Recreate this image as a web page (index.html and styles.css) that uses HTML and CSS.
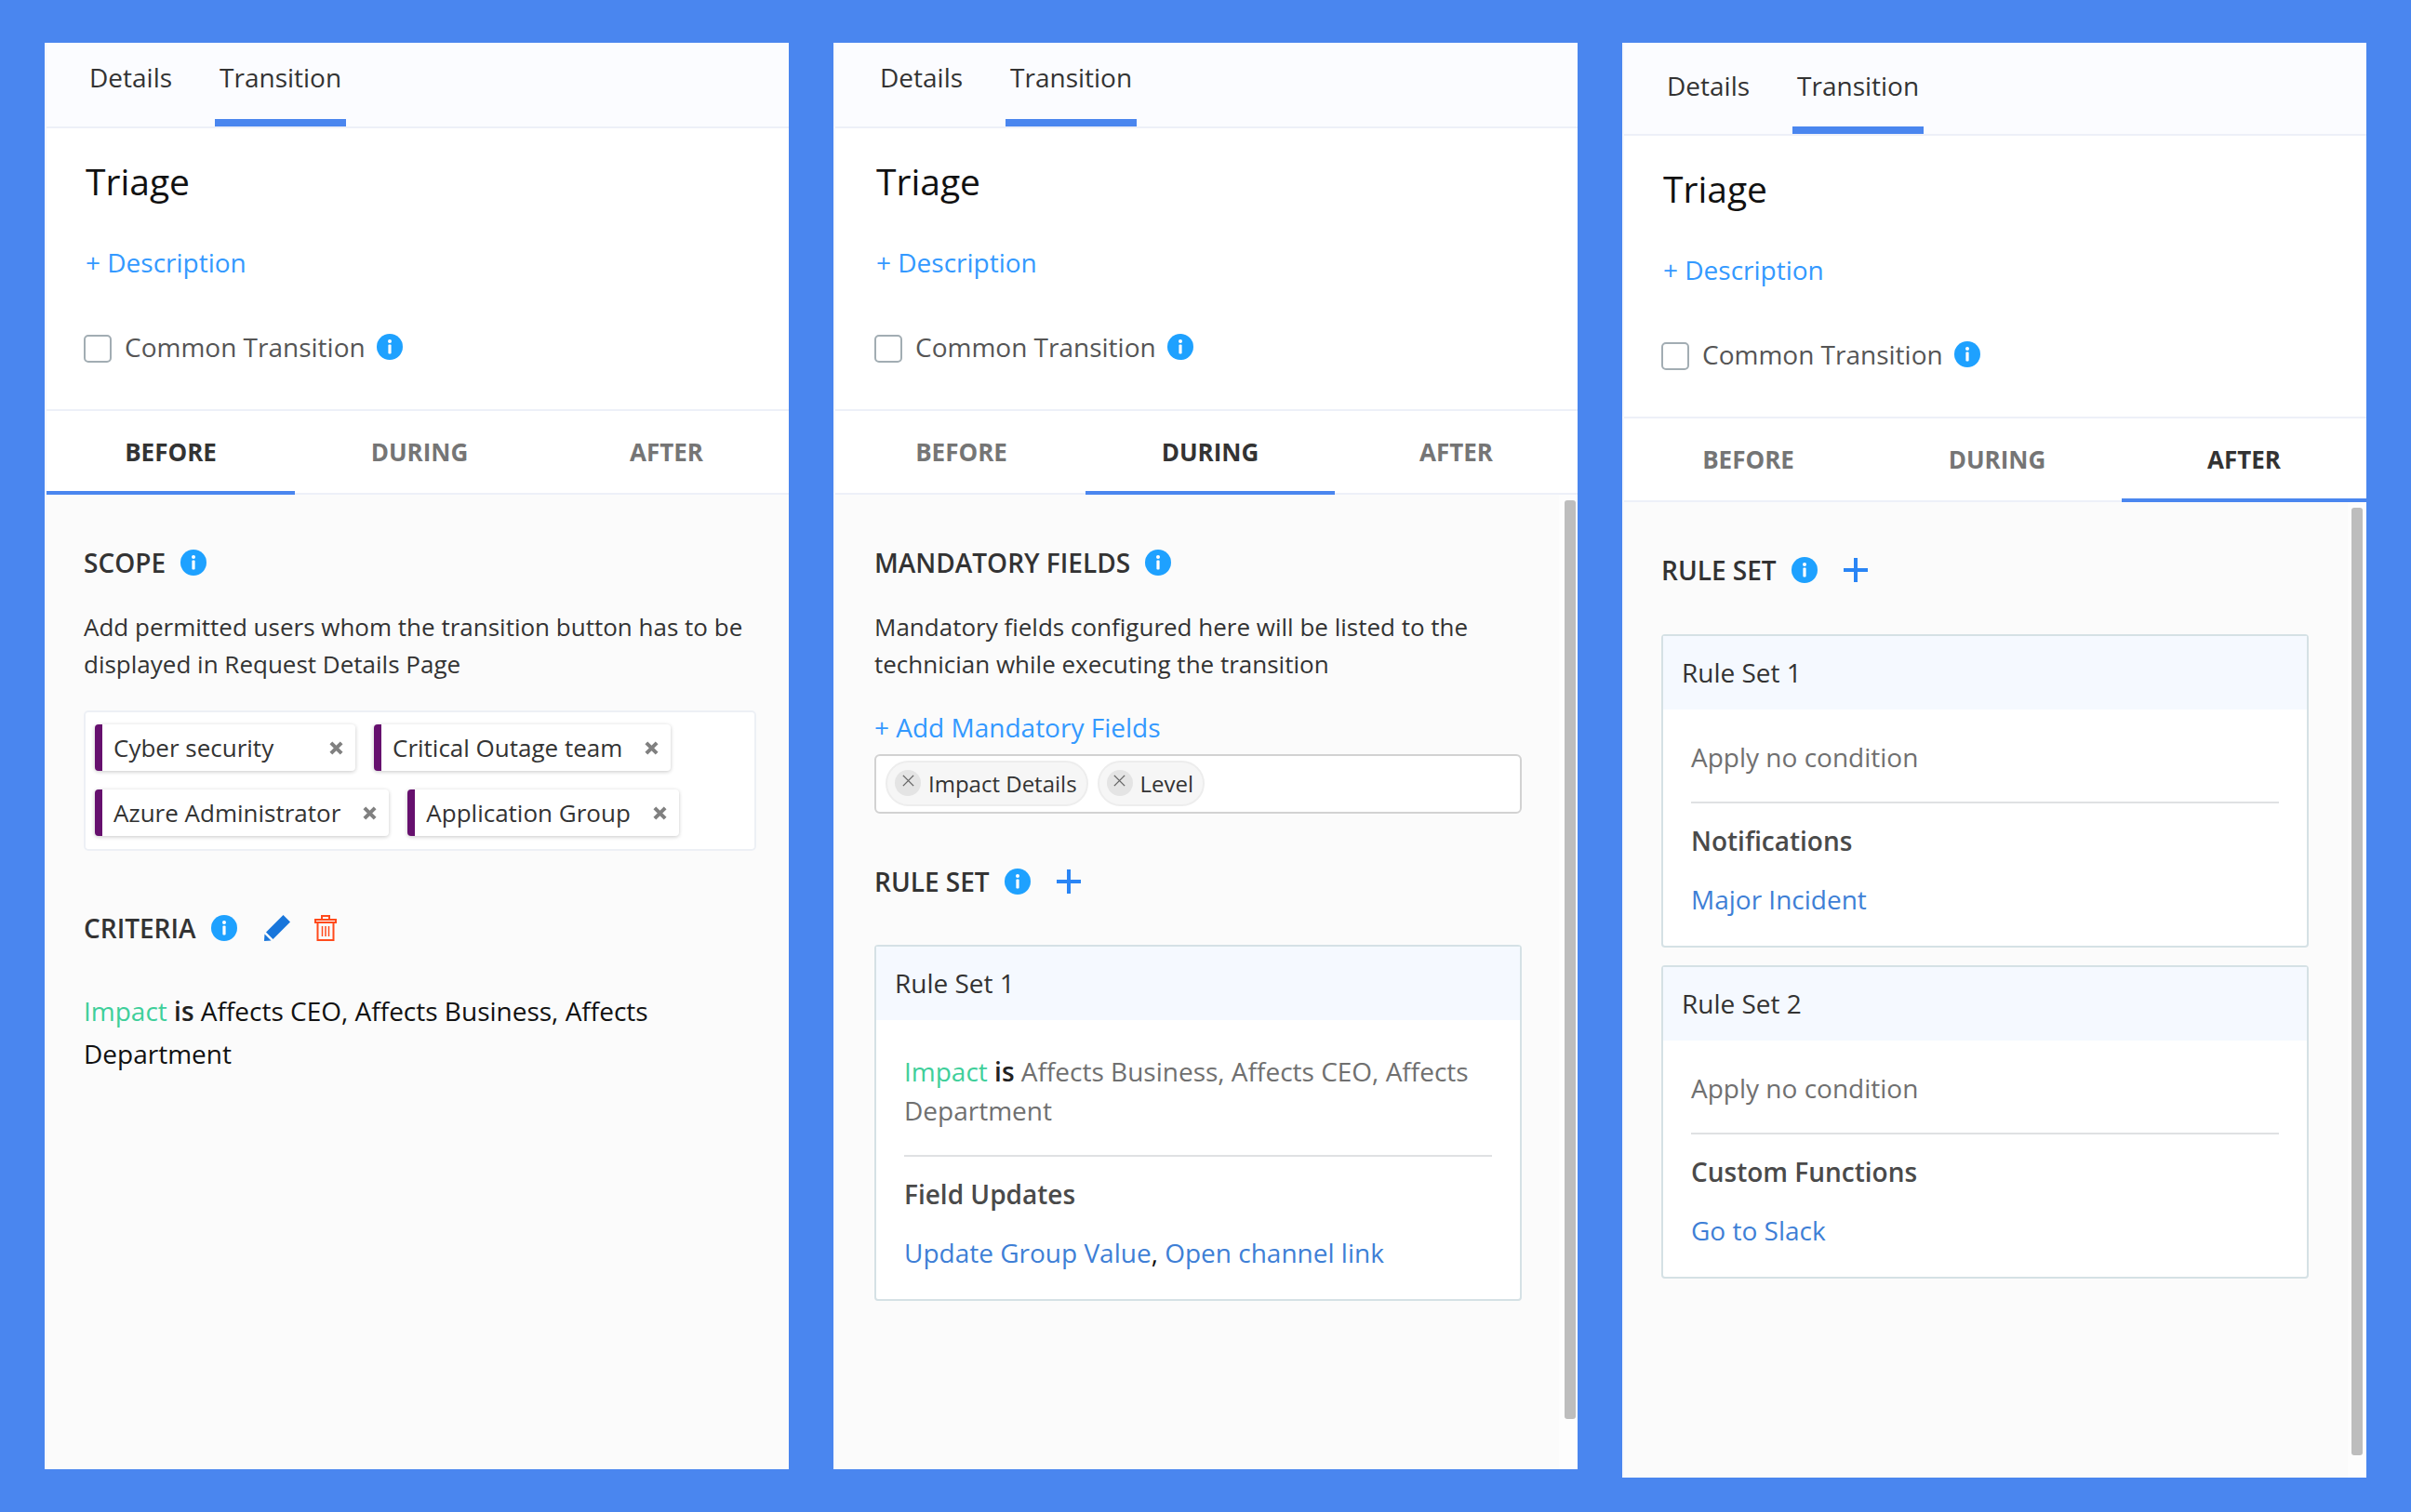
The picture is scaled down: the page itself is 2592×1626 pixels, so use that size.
FILE: index.html
```html
<!DOCTYPE html>
<html lang="en">
<head>
<meta charset="utf-8">
<title>Transition panels</title>
<link rel="stylesheet" href="styles.css">
</head>
<body>
<svg class="defs" width="0" height="0" aria-hidden="true">
  <symbol id="info" viewBox="0 0 28 28">
    <circle cx="14" cy="14" r="14" fill="#1ea1ff"/>
    <circle cx="14" cy="8" r="2" fill="#fff"/>
    <rect x="12.4" y="11.5" width="3.2" height="10" rx="1" fill="#fff"/>
  </symbol>
  <symbol id="plus" viewBox="0 0 26 26">
    <path d="M13 0v26M0 13h26" stroke="#2a85f5" stroke-width="4" fill="none"/>
  </symbol>
</svg>

<main class="board">
  <section class="panel">
    <nav class="top-tabs"><a class="top-tab">Details</a><a class="top-tab is-active">Transition</a></nav>
    <header class="head">
      <h1 class="title">Triage</h1>
      <a class="add-link desc-link">+ Description</a>
      <div class="common"><span class="check"></span><span>Common Transition</span><svg class="info"><use href="#info"/></svg></div>
    </header>
    <div class="stages"><span class="stage is-active">BEFORE</span><span class="stage">DURING</span><span class="stage">AFTER</span></div>
    <div class="body">
      <div class="sec-head"><h2 class="sec-title">SCOPE</h2><svg class="info"><use href="#info"/></svg></div>
      <p class="sec-text">Add permitted users whom the transition button has to be displayed in Request Details Page</p>
      <div class="tagbox">
        <span class="tag tag-wide">Cyber security<svg class="tag-x" viewBox="0 0 12 12"><path d="M1.500 1.500l9 9M10.500 1.500l-9 9"/></svg></span>
        <span class="tag">Critical Outage team<svg class="tag-x" viewBox="0 0 12 12"><path d="M1.500 1.500l9 9M10.500 1.500l-9 9"/></svg></span>
        <span class="tag">Azure Administrator<svg class="tag-x" viewBox="0 0 12 12"><path d="M1.500 1.500l9 9M10.500 1.500l-9 9"/></svg></span>
        <span class="tag">Application Group<svg class="tag-x" viewBox="0 0 12 12"><path d="M1.500 1.500l9 9M10.500 1.500l-9 9"/></svg></span>
      </div>
      <div class="sec-head criteria-head">
        <h2 class="sec-title">CRITERIA</h2><svg class="info"><use href="#info"/></svg>
        <svg class="pencil" viewBox="0 0 28 28"><path d="M20.500 0L28 7.500 9.500 26 2 18.500z" fill="#1976db"/><path d="M0.500 20.500L7.500 27.500 0 28z" fill="#1976db"/></svg>
        <svg class="trash" viewBox="0 0 24 28" fill="none" stroke="#ff4a1c" stroke-width="2"><path d="M8 5V1h8v4M1 5h22v3H1zM3.500 8v19h17V8"/><path d="M8.500 12v11M12 12v11M15.500 12v11" stroke-width="1.500"/></svg>
      </div>
      <p class="criteria"><span class="field">Impact</span> <b class="op">is</b> Affects CEO, Affects Business, Affects Department</p>
    </div>
  </section>

  <section class="panel panel-mid">
    <nav class="top-tabs"><a class="top-tab">Details</a><a class="top-tab is-active">Transition</a></nav>
    <header class="head">
      <h1 class="title">Triage</h1>
      <a class="add-link desc-link">+ Description</a>
      <div class="common"><span class="check"></span><span>Common Transition</span><svg class="info"><use href="#info"/></svg></div>
    </header>
    <div class="stages"><span class="stage">BEFORE</span><span class="stage is-active">DURING</span><span class="stage">AFTER</span></div>
    <div class="body body-scroll">
      <div class="sec-head"><h2 class="sec-title">MANDATORY FIELDS</h2><svg class="info"><use href="#info"/></svg></div>
      <p class="sec-text">Mandatory fields configured here will be listed to the technician while executing the transition</p>
      <a class="add-link mand-link">+ Add Mandatory Fields</a>
      <div class="chipbox">
        <span class="chip"><span class="chip-x"><svg viewBox="0 0 16 16"><path d="M2 2l12 12M14 2L2 14"/></svg></span>Impact Details</span>
        <span class="chip"><span class="chip-x"><svg viewBox="0 0 16 16"><path d="M2 2l12 12M14 2L2 14"/></svg></span>Level</span>
      </div>
      <div class="sec-head rule-head"><h2 class="sec-title">RULE SET</h2><svg class="info"><use href="#info"/></svg><svg class="plus"><use href="#plus"/></svg></div>
      <article class="card">
        <h3 class="card-head">Rule Set 1</h3>
        <div class="card-body">
          <p class="cond cond-rule"><span class="field">Impact</span> <b class="op">is</b> Affects Business, Affects CEO, Affects Department</p>
          <h4 class="act-title">Field Updates</h4>
          <p class="act-links"><a class="act">Update Group Value</a>, <a class="act">Open channel link</a></p>
        </div>
      </article>
      <div class="track"><div class="scrollbar"></div></div>
    </div>
  </section>

  <section class="panel panel-last">
    <nav class="top-tabs"><a class="top-tab">Details</a><a class="top-tab is-active">Transition</a></nav>
    <header class="head">
      <h1 class="title">Triage</h1>
      <a class="add-link desc-link">+ Description</a>
      <div class="common"><span class="check"></span><span>Common Transition</span><svg class="info"><use href="#info"/></svg></div>
    </header>
    <div class="stages"><span class="stage">BEFORE</span><span class="stage">DURING</span><span class="stage is-active">AFTER</span></div>
    <div class="body body-scroll">
      <div class="sec-head"><h2 class="sec-title">RULE SET</h2><svg class="info"><use href="#info"/></svg><svg class="plus"><use href="#plus"/></svg></div>
      <article class="card card-first">
        <h3 class="card-head">Rule Set 1</h3>
        <div class="card-body">
          <p class="cond">Apply no condition</p>
          <h4 class="act-title">Notifications</h4>
          <p class="act-links"><a class="act">Major Incident</a></p>
        </div>
      </article>
      <article class="card card-next">
        <h3 class="card-head">Rule Set 2</h3>
        <div class="card-body">
          <p class="cond">Apply no condition</p>
          <h4 class="act-title">Custom Functions</h4>
          <p class="act-links"><a class="act">Go to Slack</a></p>
        </div>
      </article>
      <div class="track"><div class="scrollbar"></div></div>
    </div>
  </section>
</main>
</body>
</html>
```
FILE: styles.css
```css
* { box-sizing: border-box; }
html, body { margin: 0; height: 100%; }
body {
  background: #4a86ef;
  font-family: "Open Sans", "Noto Sans", sans-serif;
  font-size: 26px;
  color: #333;
  overflow: hidden;
}
.defs { position: absolute; }
.board {
  display: flex;
  align-items: flex-start;
  gap: 48px;
  padding: 46px 48px 0;
}
.panel {
  width: 800px;
  height: 1534px;
  display: flex;
  flex-direction: column;
  background: #fff;
  border-left: 2px solid #f4f7fd;
  --inset: 40px;
}
.panel-mid { --inset: 42px; }
.panel-last { height: 1543px; }

.top-tabs {
  height: 92px;
  flex: none;
  display: flex;
  gap: 41px;
  padding-left: 41px;
  background: #fbfcff;
  border-bottom: 2px solid #edf0f8;
}
.panel-mid .top-tabs { padding-left: 43px; }
.panel-last .top-tabs { height: 100px; }
.top-tab {
  height: 90px;
  padding: 0 5px;
  line-height: 74px;
  font-size: 28px;
  color: #333;
}
.panel-last .top-tab { height: 98px; line-height: 92px; }
.top-tab.is-active { border-bottom: 8px solid #4a86ef; }

.head {
  height: 304px;
  flex: none;
  padding-left: var(--inset);
  border-bottom: 2px solid #edf0f8;
}
.title {
  margin: 0 0 0 2px;
  padding-top: 30px;
  font-size: 39px;
  font-weight: 400;
  line-height: 54px;
  color: #111;
}
.add-link { display: block; color: #3399ff; font-size: 28px; line-height: 36px; }
.desc-link { margin: 42px 0 0 2px; }
.common {
  display: flex;
  align-items: center;
  margin-top: 46px;
  height: 54px;
  color: #555;
  font-size: 28px;
}
.check {
  width: 30px;
  height: 30px;
  margin: 3px 14px 0 0;
  background: #fff;
  border: 2px solid #a2adb3;
  border-radius: 5px;
}
.info { width: 28px; height: 28px; margin-left: 12px; flex: none; }

.stages {
  height: 90px;
  flex: none;
  display: grid;
  grid-template-columns: 267px 268px 263px;
  border-bottom: 2px solid #edf0f8;
}
.panel-mid .stages { grid-template-columns: 267px 268px 261px; padding-left: 2px; }
.stage {
  display: block;
  height: 90px;
  line-height: 89px;
  text-align: center;
  font-size: 26px;
  font-weight: 700;
  color: #757575;
}
.stage.is-active { color: #333; border-bottom: 4px solid #4a86ef; }

.body {
  position: relative;
  flex: 1;
  background: #fbfbfb;
  padding: 53px 35px 0 var(--inset);
}
.body-scroll { padding-right: 60px; }
.panel-last .body-scroll { padding-right: 62px; }
.sec-head { display: flex; align-items: center; height: 40px; }
.sec-title { margin: 0; font-size: 28px; font-weight: 600; line-height: 40px; color: #333; }
.sec-head .info { margin-left: 16px; }
.sec-text { margin: 29px 0 0; font-size: 26px; line-height: 40px; color: #333; }

.tagbox {
  display: flex;
  flex-wrap: wrap;
  gap: 20px;
  margin-top: 30px;
  padding: 13px 10px 14px;
  background: #fff;
  border: 2px solid #edf0f5;
  border-radius: 5px;
}
.tag {
  display: flex;
  align-items: center;
  justify-content: space-between;
  height: 50px;
  padding: 0 13px 0 12px;
  font-size: 26px;
  background: #fff;
  border-left: 8px solid #66106e;
  border-radius: 4px;
  box-shadow: 0 1px 4px rgba(0, 0, 0, .22);
}
.tag-wide { min-width: 280px; }
.tag-x { width: 15px; height: 15px; margin-left: 24px; flex: none; }
.tag-x path { stroke: #808080; stroke-width: 3.200; fill: none; }

.criteria-head { margin-top: 63px; }
.pencil { width: 28px; height: 28px; margin-left: 29px; }
.trash { width: 24px; height: 28px; margin-left: 26px; }
.criteria { margin: 46px 0 0; font-size: 28px; line-height: 46px; color: #111; }
.field { color: #3ecf9a; }
.op { font-weight: 600; color: #222; }

.mand-link { margin-top: 30px; }
.chipbox {
  display: flex;
  gap: 10px;
  height: 64px;
  margin-top: 11px;
  padding: 5px 10px;
  background: #fff;
  border: 2px solid #d2d2d2;
  border-radius: 6px;
}
.chip {
  display: flex;
  align-items: center;
  height: 49px;
  padding: 0 10px 0 8px;
  font-size: 24px;
  background: #f6f6f6;
  border: 2px solid #ededed;
  border-radius: 25px;
  color: #333;
}
.chip-x {
  display: flex;
  align-items: center;
  justify-content: center;
  width: 28px;
  height: 28px;
  margin: -2px 8px 0 0;
  border-radius: 50%;
  background: #e4e4e4;
}
.chip-x svg { width: 15px; height: 15px; margin-top: -4px; }
.chip-x path { stroke: #666; stroke-width: 1.500; fill: none; }

.rule-head { margin-top: 53px; }
.plus { width: 26px; height: 26px; margin-left: 28px; flex: none; }

.card {
  margin-top: 48px;
  background: #fff;
  border: 2px solid #d5e1e5;
  border-radius: 4px;
}
.card-first { margin-top: 49px; }
.card-next { margin-top: 19px; }
.card-head {
  margin: 0;
  height: 79px;
  padding-left: 20px;
  background: #f5f9ff;
  font-size: 28px;
  font-weight: 400;
  line-height: 79px;
  color: #333;
}
.card-body { padding: 30px 30px 29px; }
.cond { margin: 0; padding-bottom: 27px; border-bottom: 2px solid #dfe1e3; font-size: 28px; line-height: 42px; color: #707070; }
.cond-rule { padding-top: 4px; }
.act-title { margin: 19px 0 0; font-size: 28px; font-weight: 600; line-height: 42px; color: #4a4a4a; }
.act-links { margin: 21px 0 0; font-size: 28px; line-height: 42px; color: #111; }
.act { color: #3e7fd6; }

.track {
  position: absolute;
  top: 0;
  right: 0;
  bottom: 0;
  width: 20px;
  background: #fdfdfd;
}
.scrollbar {
  margin: 6px 2px 0 6px;
  height: 988px;
  border-radius: 3px;
  background: #bdbdbd;
}
.panel-last .scrollbar { margin: 6px 4px 0 4px; height: 1019px; }
```
